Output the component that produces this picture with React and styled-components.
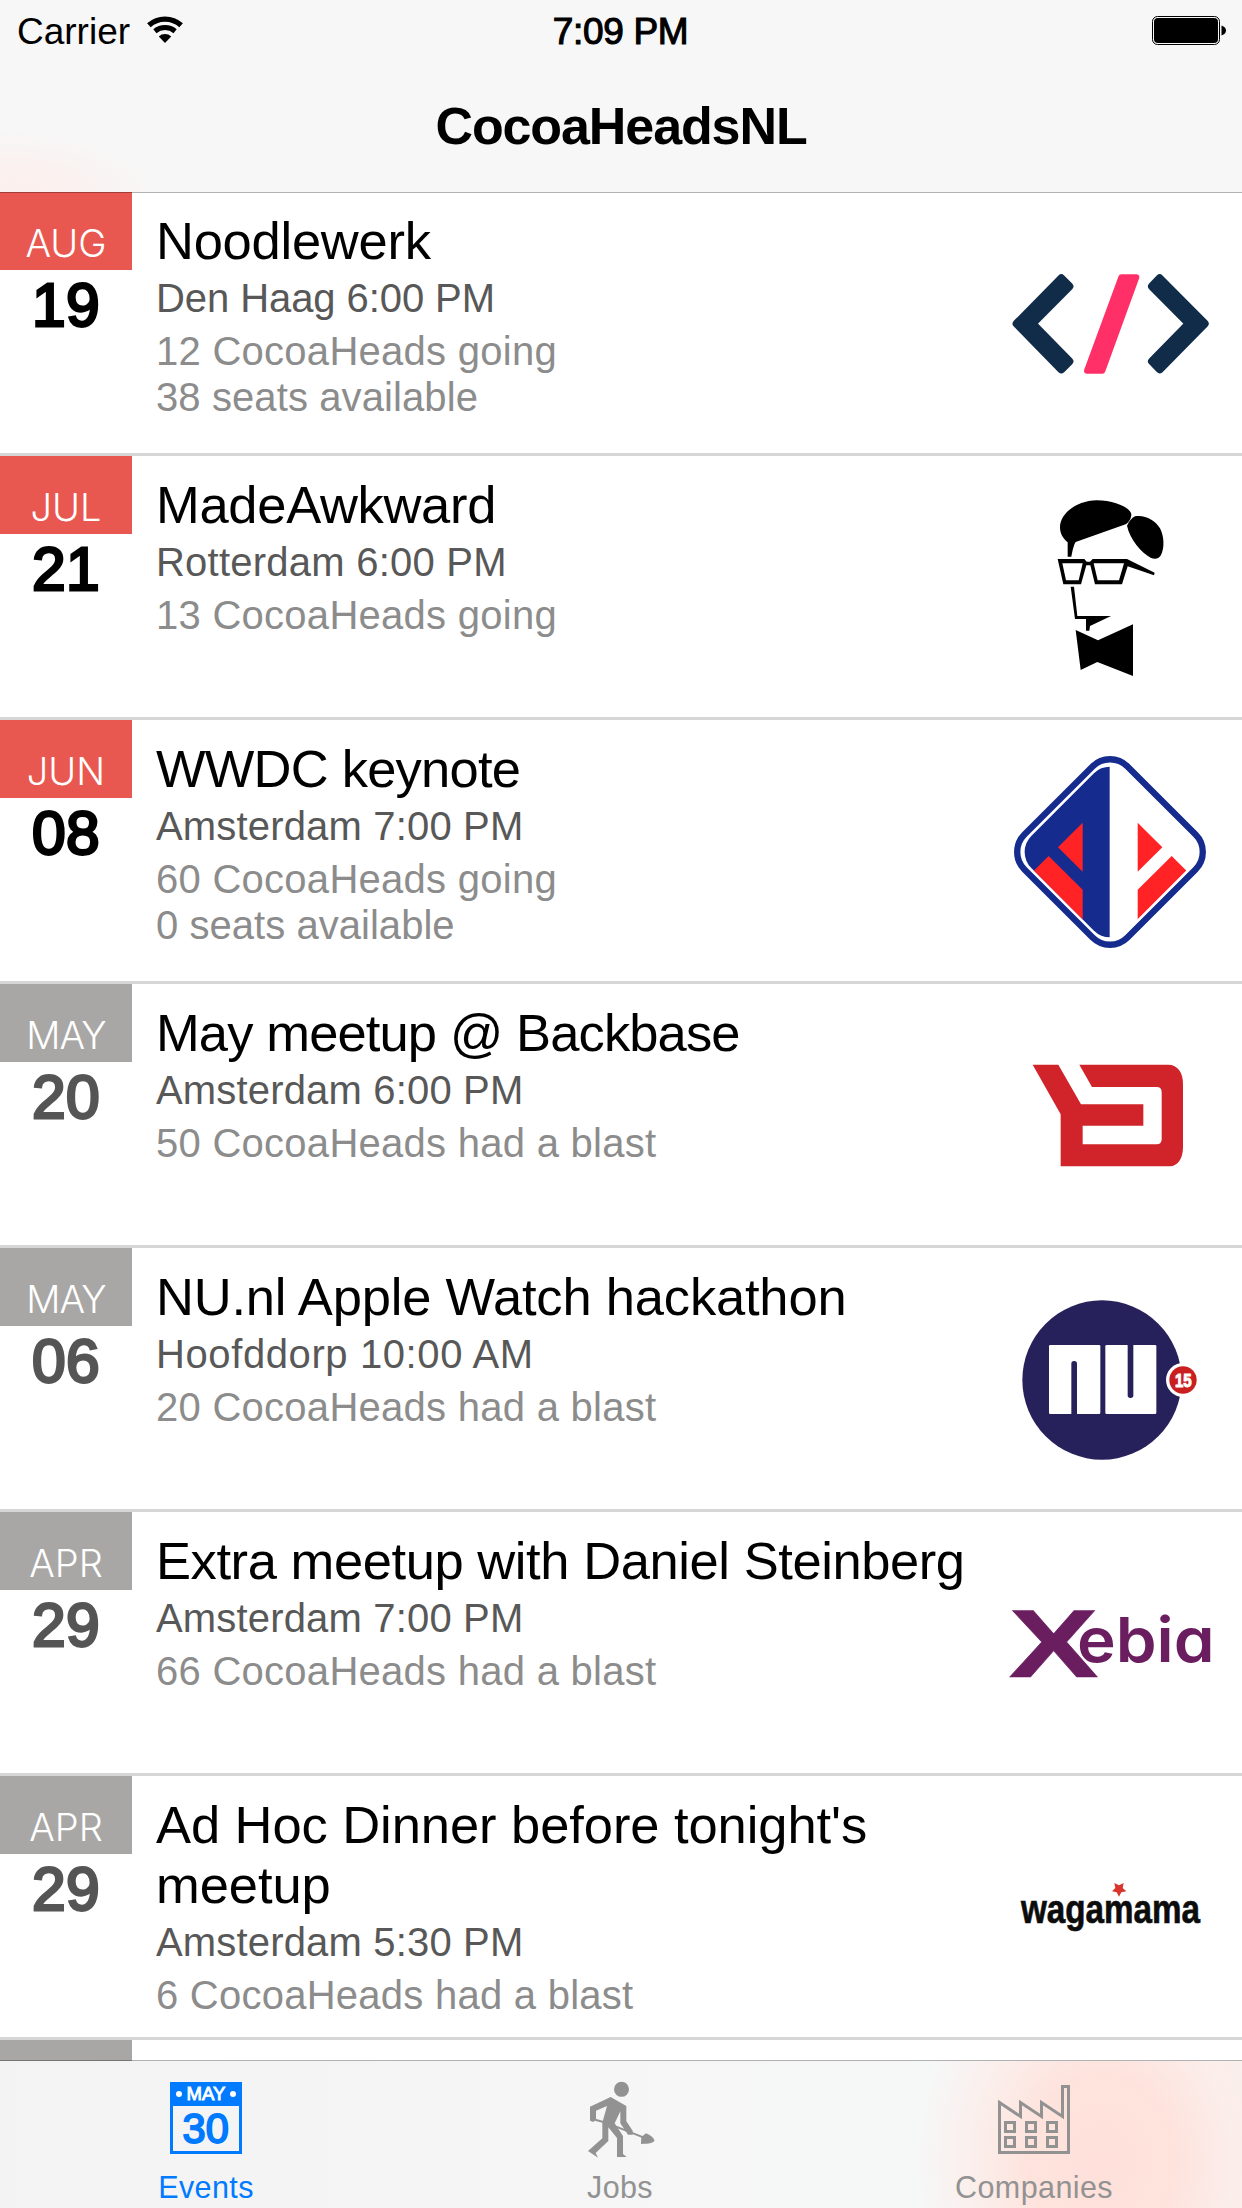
import React from "react";
import styled, { createGlobalStyle } from "styled-components";

const GlobalStyle = createGlobalStyle`
  * { box-sizing: border-box; }
  body { margin: 0; background: #fff; }
`;

const Screen = styled.div`
  width: 1242px;
  height: 2208px;
  display: flex;
  flex-direction: column;
  overflow: hidden;
  background: #fff;
  font-family: "Liberation Sans", Arial, Helvetica, sans-serif;
  color: #000;
`;

const Header = styled.header`
  flex: none;
  height: 192px;
  z-index: 1;
  background:
    radial-gradient(ellipse 150px 62px at 10px 192px, #fcefed 0%, rgba(251, 240, 238, 0.8) 45%, rgba(247, 247, 247, 0) 100%),
    #f7f7f7;
  box-shadow: 0 1px 0 rgba(0, 0, 0, 0.3);
`;

const StatusBar = styled.div`
  height: 60px;
  display: grid;
  grid-template-columns: 1fr auto 1fr;
  align-items: start;
  padding: 11px 16px 0 17px;
  font-size: 37px;
  line-height: 42px;
`;

const Carrier = styled.div`
  display: flex;
  gap: 17px;
  svg { margin-top: 5px; }
`;

const Clock = styled.div`
  -webkit-text-stroke: 1.1px #000;
  letter-spacing: -0.3px;
  margin-left: -2px;
`;

const Battery = styled.div`
  justify-self: end;
  margin-top: 5px;
  svg { display: block; }
`;

const NavTitle = styled.h1`
  margin: 36px 0 0;
  font-size: 52px;
  line-height: 60px;
  font-weight: 700;
  letter-spacing: -1.1px;
  text-align: center;
`;

const List = styled.main`
  flex: 1;
  min-height: 0;
  overflow: hidden;
`;

const Row = styled.article`
  height: 264px;
  display: flex;
  border-bottom: 3px solid #d6d6d6;
`;

const DateColumn = styled.div`
  flex: none;
  width: 132px;
  text-align: center;
`;

const Month = styled.div`
  height: 78px;
  padding-top: 24px;
  background: ${(p) => (p.$past ? "#a8a7a5" : "#e95850")};
  color: #fff;
  font-family: Inter, "Liberation Sans", sans-serif;
  font-weight: 300;
  font-size: 38px;
  line-height: 54px;
  letter-spacing: ${(p) => p.$track ?? 0}px;
`;

const Day = styled.div`
  font-size: 60.5px;
  line-height: 71px;
  font-weight: 400;
  letter-spacing: 0.4px;
  -webkit-text-stroke: 2.8px currentColor;
  color: ${(p) => (p.$past ? "#555" : "#000")};
`;

const Details = styled.div`
  flex: 1;
  min-width: 0;
  padding: 19px 0 0 24px;
`;

const Title = styled.h2`
  margin: 0;
  font-weight: 400;
  font-size: 52.5px;
  line-height: 60px;
  letter-spacing: ${(p) => p.$track}px;
`;

const Venue = styled.div`
  margin-top: 4px;
  font-size: 40px;
  line-height: 46px;
  letter-spacing: ${(p) => p.$track}px;
  color: #585858;
`;

const Attendance = styled.div`
  margin-top: 7px;
`;

const AttendanceLine = styled.div`
  font-size: 40px;
  line-height: 46px;
  letter-spacing: ${(p) => p.$track}px;
  color: #8c8c8c;
`;

const LogoSlot = styled.div`
  flex: none;
  width: 220px;
  height: 220px;
  margin: 22px 22px 0 0;
  svg { display: block; width: 220px; height: 220px; overflow: visible; }
`;

const TabBar = styled.nav`
  flex: none;
  height: 147px;
  z-index: 1;
  display: grid;
  grid-template-columns: repeat(3, 1fr);
  background:
    radial-gradient(ellipse 185px 220px at 1102px 100px, #ffe0da 0%, #fee3dd 40%, rgba(252, 236, 232, 0.75) 70%, rgba(249, 243, 242, 0) 100%),
    linear-gradient(90deg, #f3f3f3, #f6f6f6 50%, #f6f7f7 78%, #f9f0ef);
  box-shadow: 0 -1px 0 rgba(0, 0, 0, 0.3);
`;

const Tab = styled.div`
  display: flex;
  flex-direction: column;
  align-items: center;
  padding: 21px 2px 0 0;
  color: ${(p) => (p.$active ? "#007aff" : "#929292")};
  svg { display: block; overflow: visible; }
`;

const TabLabel = styled.span`
  margin-top: 16px;
  font-size: 30.5px;
  line-height: 34px;
  letter-spacing: 0.4px;
`;

const WifiIcon = () => (
  <svg width="36" height="27" viewBox="0 0 36 27">
    <g fill="none" stroke="#000">
      <path d="M1.9 9.3A24 24 0 0 1 34.1 9.3" strokeWidth="5.4" />
      <path d="M7.9 15.2A15.9 15.9 0 0 1 28.1 15.2" strokeWidth="5" />
    </g>
    <path d="M18 27L11.8 20.4A9 9 0 0 1 24.2 20.4Z" />
  </svg>
);

const BatteryIcon = () => (
  <svg width="74" height="29" viewBox="0 0 74 29">
    <rect x="0.5" y="0.5" width="67" height="28" rx="5" fill="none" stroke="#000" />
    <rect x="2" y="2" width="64" height="25" rx="4" />
    <path d="M69.5 9.5C72.5 10.5 74 12.2 74 14.5S72.5 18.5 69.5 19.5Z" />
  </svg>
);

const NoodlewerkLogo = () => (
  <svg viewBox="0 0 660 660">
    <g transform="translate(-30 108)" strokeLinejoin="round">
      <g fill="#112c49" stroke="#112c49" strokeWidth="24">
        <path d="M80 221L214 85L238 109L127 221L238 334L214 358Z" />
        <path d="M644 221L509 85L486 109L597 221L486 334L509 358Z" />
      </g>
      <path d="M394 82H439L337 362H291Z" fill="#ff2f67" stroke="#ff2f67" strokeWidth="18" />
    </g>
  </svg>
);

const AwkwardLogo = () => (
  <svg viewBox="0 0 660 660">
    <g transform="translate(90 6)">
      <path d="M90 142C90 100 140 62 200 61C255 61 303 85 304 103C304 115 297 127 287 133L137 186C131 195 127 215 124 230H113V187C98 175 90 160 90 142Z" />
      <path d="M291 137C297 125 305 113 315 109C345 104 375 120 390 145C403 170 404 205 393 225C388 236 375 239 362 233C335 218 300 180 291 137Z" />
      <path
        fillRule="evenodd"
        d="M83 237H163L170 245H180L188 237H291L374 278L372 286L293 259L276 313H195L181 256H169L153 313H100ZM97 250L108 301H146L158 250ZM191 250L203 301H267L282 250Z"
      />
      <path d="M122 320H132L142 408H243L180 438L178 452H168V417H135Z" />
      <path d="M137 450L204 481L309 433V588L202 546L152 570Z" />
    </g>
  </svg>
);

const DiamondLogo = () => (
  <svg viewBox="0 0 660 660">
    <defs>
      <clipPath id="leftHalf">
        <rect x="0" y="0" width="329" height="660" />
      </clipPath>
      <clipPath id="innerDiamond">
        <rect x="129" y="135" width="402" height="402" rx="68" transform="rotate(45 330 336)" />
      </clipPath>
    </defs>
    <g transform="translate(0 -6)">
      <rect x="111.5" y="117.5" width="437" height="437" rx="74" transform="rotate(45 330 336)" fill="#fff" stroke="#152b8d" strokeWidth="19" />
      <g clipPath="url(#leftHalf)">
        <rect x="129" y="135" width="402" height="402" rx="68" transform="rotate(45 330 336)" fill="#152b8d" />
      </g>
      <g fill="#ff2326" clipPath="url(#innerDiamond)">
        <path d="M248 248L174 322L248 395Z" />
        <path d="M146 348L94 400L248 551V449Z" />
        <path d="M413 248L487 322L413 395Z" />
        <path d="M515 348L567 400L413 551V449Z" />
      </g>
    </g>
  </svg>
);

const BackbaseLogo = () => (
  <svg viewBox="0 0 660 660">
    <path
      transform="translate(30 102)"
      fill="#d0242a"
      d="M68 74H145L213 193H400V257H218V313H440Q455 313 455 298V157Q455 141 440 141H246L208 74H474C504 74 519 98 519 132V322C519 356 503 379 480 379H152V223Z"
    />
  </svg>
);

const NuLogo = () => (
  <svg viewBox="0 0 660 660">
    <g transform="translate(0 30)">
      <circle cx="306" cy="300" r="239" fill="#27215b" />
      <rect x="147" y="195" width="154" height="207" rx="4" fill="#fff" />
      <rect x="316" y="195" width="153" height="207" rx="4" fill="#fff" />
      <rect x="214" y="243" width="17" height="166" rx="8" fill="#27215b" />
      <rect x="383" y="188" width="17" height="166" rx="8" fill="#27215b" />
      <circle cx="549" cy="300" r="51" fill="#fff" />
      <circle cx="549" cy="300" r="41" fill="#c91f1f" />
      <text x="525" y="320" fontFamily="Liberation Sans, sans-serif" fontWeight="700" fontSize="54" fill="#fff" stroke="#fff" strokeWidth="3" textLength="50" lengthAdjust="spacingAndGlyphs">15</text>
    </g>
  </svg>
);

const XebiaLogo = () => (
  <svg viewBox="0 0 660 660">
    <g transform="translate(-30 138)" fill="#6a1e5f">
      <text x="56" y="291" fontFamily="Liberation Sans, sans-serif" fontWeight="700" fontSize="288" stroke="#6a1e5f" strokeWidth="2" textLength="269" lengthAdjust="spacingAndGlyphs">X</text>
      <text
        x="261"
        y="246"
        fontFamily="Inter, Lato, sans-serif"
        fontWeight="600"
        fontSize="186"
        textLength="413"
        lengthAdjust="spacingAndGlyphs"
        style={{ fontFeatureSettings: '"cv11"' }}
      >ebia</text>
    </g>
  </svg>
);

const WagamamaLogo = () => (
  <svg viewBox="0 0 660 660">
    <g transform="translate(0 186)">
      <text x="63" y="190" fontFamily="Liberation Sans, sans-serif" fontWeight="700" fontSize="121" fill="#0c0c0c" stroke="#0c0c0c" strokeWidth="2" textLength="537" lengthAdjust="spacingAndGlyphs">wagamama</text>
      <path d="M357 110L350 97L336 94L346 84L343 69L357 76L371 69L368 84L379 94L364 97Z" fill="#d8352c" />
    </g>
  </svg>
);

const CalendarIcon = () => (
  <svg width="72" height="72" viewBox="0 0 72 72" fill="currentColor" fontFamily="Liberation Sans, sans-serif">
    <rect x="1.5" y="1.5" width="69" height="69" fill="none" stroke="currentColor" strokeWidth="3" />
    <rect width="72" height="24" />
    <circle cx="9" cy="12" r="3" fill="#fff" />
    <circle cx="63" cy="12" r="3" fill="#fff" />
    <text x="16.5" y="18.2" fontSize="19" fill="#fff" stroke="#fff" strokeWidth="0.9" textLength="38.8" lengthAdjust="spacingAndGlyphs">MAY</text>
    <text x="12.6" y="60.8" fontSize="42" stroke="currentColor" strokeWidth="1.9" textLength="46.2" lengthAdjust="spacingAndGlyphs">30</text>
  </svg>
);

const DiggerIcon = () => (
  <svg width="70" height="72" viewBox="135 126 210 216" fill="currentColor">
    <circle cx="244.5" cy="148" r="22.5" />
    <path d="M212 171L259 198V244L278 272V284L264 284L241 250V214L224 250L249 288V342L260 351H231V294L205 262V303L167 339L174 353L144 333L187 295V248L201 198L168 212V238L160 246L150 242V200Z" />
    <path d="M160 238L190 246M226 259L310 292" stroke="currentColor" strokeWidth="6" />
    <path d="M303 312L304 291L318 280C332 285 341 293 343 301C342 309 328 312 303 312Z" />
  </svg>
);

const FactoryIcon = () => (
  <svg width="72" height="72" viewBox="0 0 72 72" fill="none" stroke="currentColor" strokeWidth="3">
    <path d="M1.5 20.5L22.5 34.5V20.5L43.5 34.5V20.5L64.5 34.5V4.5H70.5V70.5H1.5Z" />
    {[7.5, 28.5, 49.5].map((x) =>
      [40.5, 55.5].map((y) => <rect key={`${x}-${y}`} x={x} y={y} width="9" height="9" />)
    )}
  </svg>
);

const events = [
  {
    month: "AUG", day: "19", Logo: NoodlewerkLogo,
    title: "Noodlewerk", titleTrack: -0.25,
    venue: "Den Haag 6:00 PM", venueTrack: -0.08,
    lines: [["12 CocoaHeads going", 0.27], ["38 seats available", 0.1]],
  },
  {
    month: "JUL", day: "21", Logo: AwkwardLogo,
    title: "MadeAwkward", titleTrack: -0.3,
    venue: "Rotterdam 6:00 PM", venueTrack: 0.23,
    lines: [["13 CocoaHeads going", 0.27]],
  },
  {
    month: "JUN", day: "08", Logo: DiamondLogo,
    title: "WWDC keynote", titleTrack: -0.77,
    venue: "Amsterdam 7:00 PM", venueTrack: 0.17,
    lines: [["60 CocoaHeads going", 0.27], ["0 seats available", 0.04]],
  },
  {
    month: "MAY", monthTrack: -1, day: "20", past: true, Logo: BackbaseLogo,
    title: "May meetup @ Backbase", titleTrack: -0.87,
    venue: "Amsterdam 6:00 PM", venueTrack: 0.17,
    lines: [["50 CocoaHeads had a blast", 0.27]],
  },
  {
    month: "MAY", monthTrack: -1, day: "06", past: true, Logo: NuLogo,
    title: "NU.nl Apple Watch hackathon", titleTrack: -0.19,
    venue: "Hoofddorp 10:00 AM", venueTrack: 0.6,
    lines: [["20 CocoaHeads had a blast", 0.27]],
  },
  {
    month: "APR", day: "29", past: true, Logo: XebiaLogo,
    title: "Extra meetup with Daniel Steinberg", titleTrack: -0.42,
    venue: "Amsterdam 7:00 PM", venueTrack: 0.17,
    lines: [["66 CocoaHeads had a blast", 0.27]],
  },
  {
    month: "APR", day: "29", past: true, Logo: WagamamaLogo,
    title: "Ad Hoc Dinner before tonight's meetup", titleTrack: -0.07,
    venue: "Amsterdam 5:30 PM", venueTrack: 0.17,
    lines: [["6 CocoaHeads had a blast", 0.25]],
  },
];

const EventRow = ({ month, monthTrack, day, past, title, titleTrack, venue, venueTrack, lines, Logo }) => (
  <Row>
    <DateColumn>
      <Month $past={past} $track={monthTrack}>{month}</Month>
      <Day $past={past}>{day}</Day>
    </DateColumn>
    <Details>
      <Title $track={titleTrack}>{title}</Title>
      <Venue $track={venueTrack}>{venue}</Venue>
      <Attendance>
        {lines.map(([line, track]) => (
          <AttendanceLine key={line} $track={track}>{line}</AttendanceLine>
        ))}
      </Attendance>
    </Details>
    <LogoSlot><Logo /></LogoSlot>
  </Row>
);

export default function App() {
  return (
    <Screen>
      <GlobalStyle />
      <Header>
        <StatusBar>
          <Carrier>Carrier <WifiIcon /></Carrier>
          <Clock>7:09 PM</Clock>
          <Battery><BatteryIcon /></Battery>
        </StatusBar>
        <NavTitle>CocoaHeadsNL</NavTitle>
      </Header>
      <List>
        {events.map((event, i) => <EventRow key={i} {...event} />)}
        <Row>
          <DateColumn><Month $past /></DateColumn>
        </Row>
      </List>
      <TabBar>
        <Tab $active><CalendarIcon /><TabLabel>Events</TabLabel></Tab>
        <Tab><DiggerIcon /><TabLabel>Jobs</TabLabel></Tab>
        <Tab><FactoryIcon /><TabLabel>Companies</TabLabel></Tab>
      </TabBar>
    </Screen>
  );
}
